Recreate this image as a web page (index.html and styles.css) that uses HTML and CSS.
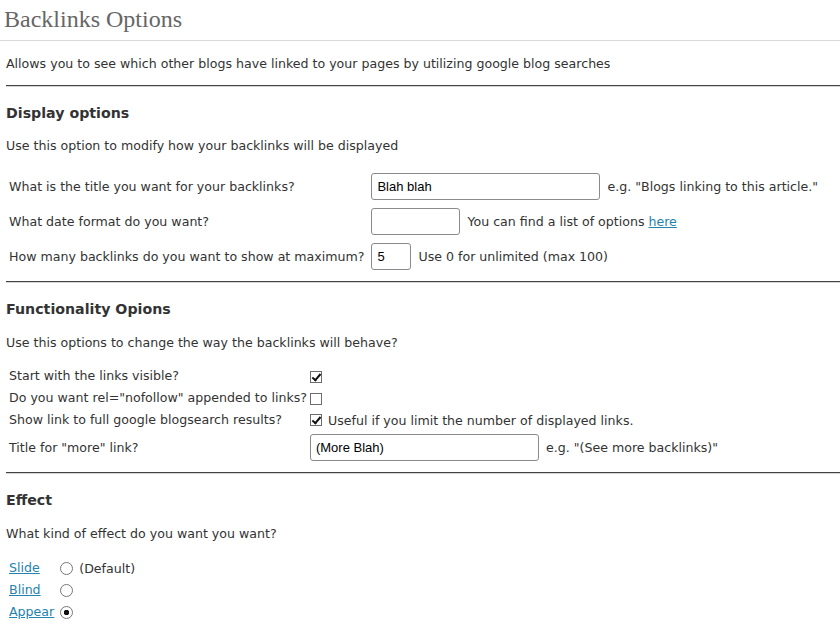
FILE: index.html
```html
<!DOCTYPE html>
<html>
<head>
<meta charset="utf-8">
<title>Backlinks Options</title>
<link rel="stylesheet" href="styles.css">
</head>
<body>
<div class="wrap">
  <h2 class="page-title">Backlinks Options</h2>
  <div class="content">
    <p class="intro">Allows you to see which other blogs have linked to your pages by utilizing google blog searches</p>
    <hr class="sep">

    <h3 class="section-title">Display options</h3>
    <p class="section-desc">Use this option to modify how your backlinks will be displayed</p>
    <table class="opts opts-display">
      <tr>
        <td>What is the title you want for your backlinks?</td>
        <td><input class="field field-title" type="text" value="Blah blah"><span class="hint">e.g. "Blogs linking to this article."</span></td>
      </tr>
      <tr>
        <td>What date format do you want?</td>
        <td><input class="field field-date" type="text" value=""><span class="hint">You can find a list of options <a href="#">here</a></span></td>
      </tr>
      <tr>
        <td>How many backlinks do you want to show at maximum?</td>
        <td><input class="field field-num" type="text" value="5"><span class="hint">Use 0 for unlimited (max 100)</span></td>
      </tr>
    </table>
    <hr class="sep sep-2">

    <h3 class="section-title">Functionality Opions</h3>
    <p class="section-desc section-desc-loose">Use this options to change the way the backlinks will behave?</p>
    <table class="opts opts-func">
      <tr class="row-check">
        <td>Start with the links visible?</td>
        <td><input class="check" type="checkbox" checked></td>
      </tr>
      <tr class="row-check">
        <td>Do you want rel="nofollow" appended to links?</td>
        <td><input class="check" type="checkbox"></td>
      </tr>
      <tr class="row-check">
        <td>Show link to full google blogsearch results?</td>
        <td><input class="check" type="checkbox" checked><span class="hint">Useful if you limit the number of displayed links.</span></td>
      </tr>
      <tr class="row-field">
        <td>Title for "more" link?</td>
        <td><input class="field field-title" type="text" value="(More Blah)"><span class="hint">e.g. "(See more backlinks)"</span></td>
      </tr>
    </table>
    <hr class="sep sep-3">

    <h3 class="section-title">Effect</h3>
    <p class="section-desc section-desc-loose">What kind of effect do you want you want?</p>
    <table class="opts opts-effect">
      <tr class="row-check">
        <td><a href="#">Slide</a></td>
        <td><input class="radio" type="radio" name="effect"><span class="hint">(Default)</span></td>
      </tr>
      <tr class="row-check">
        <td><a href="#">Blind</a></td>
        <td><input class="radio" type="radio" name="effect"></td>
      </tr>
      <tr class="row-check">
        <td><a href="#">Appear</a></td>
        <td><input class="radio" type="radio" name="effect" checked></td>
      </tr>
    </table>
  </div>
</div>
</body>
</html>
```
FILE: styles.css
```css
html, body {
  margin: 0;
  padding: 0;
  background: #fff;
}

body {
  font-family: "DejaVu Sans", "Bitstream Vera Sans", sans-serif;
  font-size: 12.6px;
  color: #333;
}

.wrap {
  width: 840px;
  overflow: hidden;
}

.page-title {
  margin: 0;
  padding: 4px 4px 6px;
  font-family: "Liberation Serif", "Times New Roman", serif;
  font-weight: normal;
  font-size: 24px;
  line-height: 30px;
  color: #666;
  border-bottom: 1px solid #dadada;
}

.content {
  padding-left: 6px;
}

.intro {
  margin: 14px 0 12px;
  line-height: 18px;
}

.sep {
  height: 0;
  margin: 0;
  border: 0;
  border-top: 1px solid #444;
  border-bottom: 1px solid #d4d4d4;
}

.section-title {
  margin: 16px 0 0;
  font-size: 14.2px;
  font-weight: bold;
  line-height: 20px;
  color: #333;
}

.section-desc {
  margin: 14px 0 0;
  line-height: 18px;
}

.section-desc-loose {
  margin-top: 15px;
}

.opts {
  border-collapse: collapse;
  border-spacing: 0;
}

.opts td {
  padding: 0 3px;
  vertical-align: middle;
  white-space: nowrap;
  line-height: 18px;
}

.opts-display {
  margin-top: 14px;
}

.opts-display td:first-child {
  padding-right: 4px;
}

.opts-display tr {
  height: 35px;
}

.sep-2 {
  margin-top: 7px;
}

.opts-func {
  margin-top: 13px;
}

.opts-func td:first-child {
  padding-right: 0;
}

.row-check {
  height: 22px;
}

.row-field {
  height: 33px;
}

.sep-3 {
  margin-top: 8px;
}

.opts-effect {
  margin-top: 14px;
}

.field {
  box-sizing: border-box;
  height: 27px;
  margin: 0 7px 0 0;
  padding: 0 5px;
  font-family: "Liberation Sans", Arial, sans-serif;
  font-size: 13px;
  color: #000;
  border: 1px solid #8a8a8a;
  border-radius: 3px;
  background: #fff;
  vertical-align: middle;
}

.field-title {
  width: 229px;
}

.field-date {
  width: 89px;
}

.field-num {
  width: 40px;
}

.hint {
  vertical-align: middle;
}

a {
  color: #2583ad;
  text-decoration: underline;
}

.check {
  -webkit-appearance: none;
  appearance: none;
  position: relative;
  box-sizing: border-box;
  width: 12px;
  height: 12px;
  margin: 0 6px 0 0;
  border: 1px solid #6c6c6c;
  border-radius: 0;
  background: #fff;
  vertical-align: middle;
}

.check:checked::after {
  content: "";
  position: absolute;
  left: 3px;
  top: 0px;
  width: 3px;
  height: 7px;
  border-right: 2px solid #111;
  border-bottom: 2px solid #111;
  transform: rotate(40deg);
}

.radio {
  -webkit-appearance: none;
  appearance: none;
  box-sizing: border-box;
  width: 13px;
  height: 13px;
  margin: 0 6px 0 0;
  border: 1px solid #777;
  border-radius: 50%;
  background: #fff;
  vertical-align: middle;
}

.radio:checked {
  background: radial-gradient(circle, #111 0, #111 2.5px, #fff 3px);
}
```
